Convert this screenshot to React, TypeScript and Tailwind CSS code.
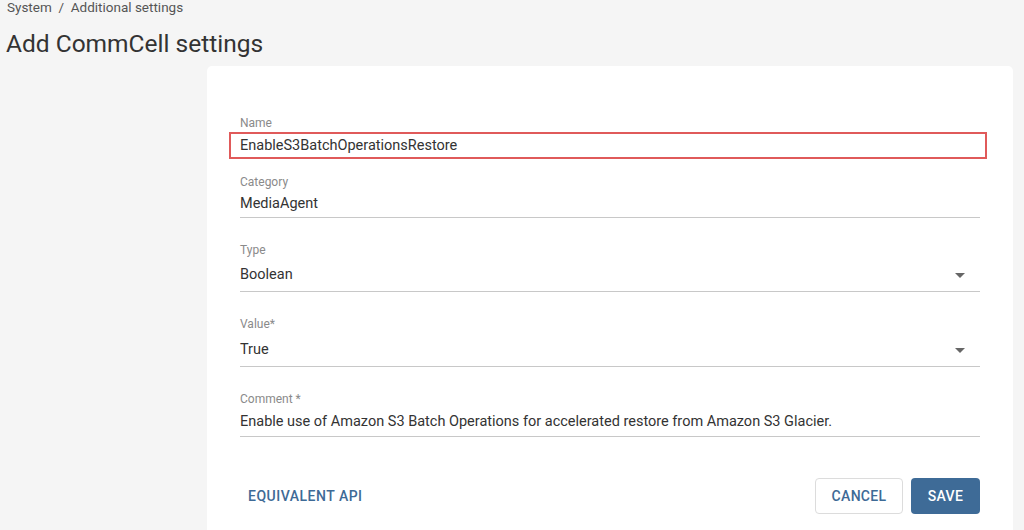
import React from "react";

const Caret = () => (
  <svg width="10" height="5" viewBox="0 0 10 5" className="shrink-0">
    <path d="M0 0 L10 0 L5 5 Z" fill="#666666" />
  </svg>
);

export default function App() {
  return (
    <div
      className="w-[1024px] h-[530px] overflow-hidden bg-[#f5f5f5] flex flex-col"
      style={{ fontFamily: "Roboto, 'Liberation Sans', sans-serif" }}
    >
      <div className="pl-[7px] h-[14px] leading-[14px] text-[13.5px] text-[#555555]">
        System&nbsp;&nbsp;/&nbsp;&nbsp;Additional settings
      </div>
      <h1 className="pl-[6px] mt-[14px] h-[32px] leading-[32px] text-[24.5px] text-[#333333] font-normal">
        Add CommCell settings
      </h1>
      <div className="flex mt-[6px] flex-1">
        <div className="w-[207px] shrink-0" />
        <div className="flex-1 mr-[11px] bg-white rounded-t-[5px] pt-[49px] px-[33px]">
          {/* Name */}
          <div className="h-[16px] leading-[16px] text-[12px] text-[#8a8a8a]">Name</div>
          <div className="-ml-[11px] -mr-[7px] mt-[1px] h-[27px] border-2 border-[#e05a5a] pl-[9px] flex items-center text-[14.5px] text-[#333333]">
            EnableS3BatchOperationsRestore
          </div>

          {/* Category */}
          <div className="mt-[15px] h-[16px] leading-[16px] text-[12px] text-[#8a8a8a]">Category</div>
          <div className="mt-[4px] h-[24px] leading-[20px] text-[14.5px] text-[#333333] border-b border-[#c8c8c8]">
            MediaAgent
          </div>

          {/* Type */}
          <div className="mt-[24px] h-[16px] leading-[16px] text-[12px] text-[#8a8a8a]">Type</div>
          <div className="mt-[7px] h-[27px] flex items-start justify-between text-[14.5px] text-[#333333] border-b border-[#c8c8c8]">
            <span className="leading-[20px]">Boolean</span>
            <span className="mt-[8px] mr-[15px]"><Caret /></span>
          </div>

          {/* Value */}
          <div className="mt-[24px] h-[16px] leading-[16px] text-[12px] text-[#8a8a8a]">Value*</div>
          <div className="mt-[8px] h-[27px] flex items-start justify-between text-[14.5px] text-[#333333] border-b border-[#c8c8c8]">
            <span className="leading-[20px]">True</span>
            <span className="mt-[8px] mr-[15px]"><Caret /></span>
          </div>

          {/* Comment */}
          <div className="mt-[24px] h-[16px] leading-[16px] text-[12px] text-[#8a8a8a]">Comment *</div>
          <div className="mt-[5px] h-[25px] leading-[20px] text-[14.5px] text-[#333333] border-b border-[#c8c8c8]">
            Enable use of Amazon S3 Batch Operations for accelerated restore from Amazon S3 Glacier.
          </div>

          {/* Buttons */}
          <div className="mt-[41px] flex items-center justify-between">
            <button className="h-[36px] px-[8px] text-[14px] font-medium tracking-[0.5px] text-[#3e6a96]">
              EQUIVALENT API
            </button>
            <div className="flex gap-[8px]">
              <button className="h-[36px] w-[88px] rounded-[4px] border border-[#dcdcdc] bg-white text-[14px] font-medium tracking-[0.3px] text-[#3e6a96]">
                CANCEL
              </button>
              <button className="h-[36px] w-[69px] rounded-[4px] bg-[#3e6b97] text-[14px] font-medium tracking-[0.3px] text-white">
                SAVE
              </button>
            </div>
          </div>
        </div>
      </div>
    </div>
  );
}
